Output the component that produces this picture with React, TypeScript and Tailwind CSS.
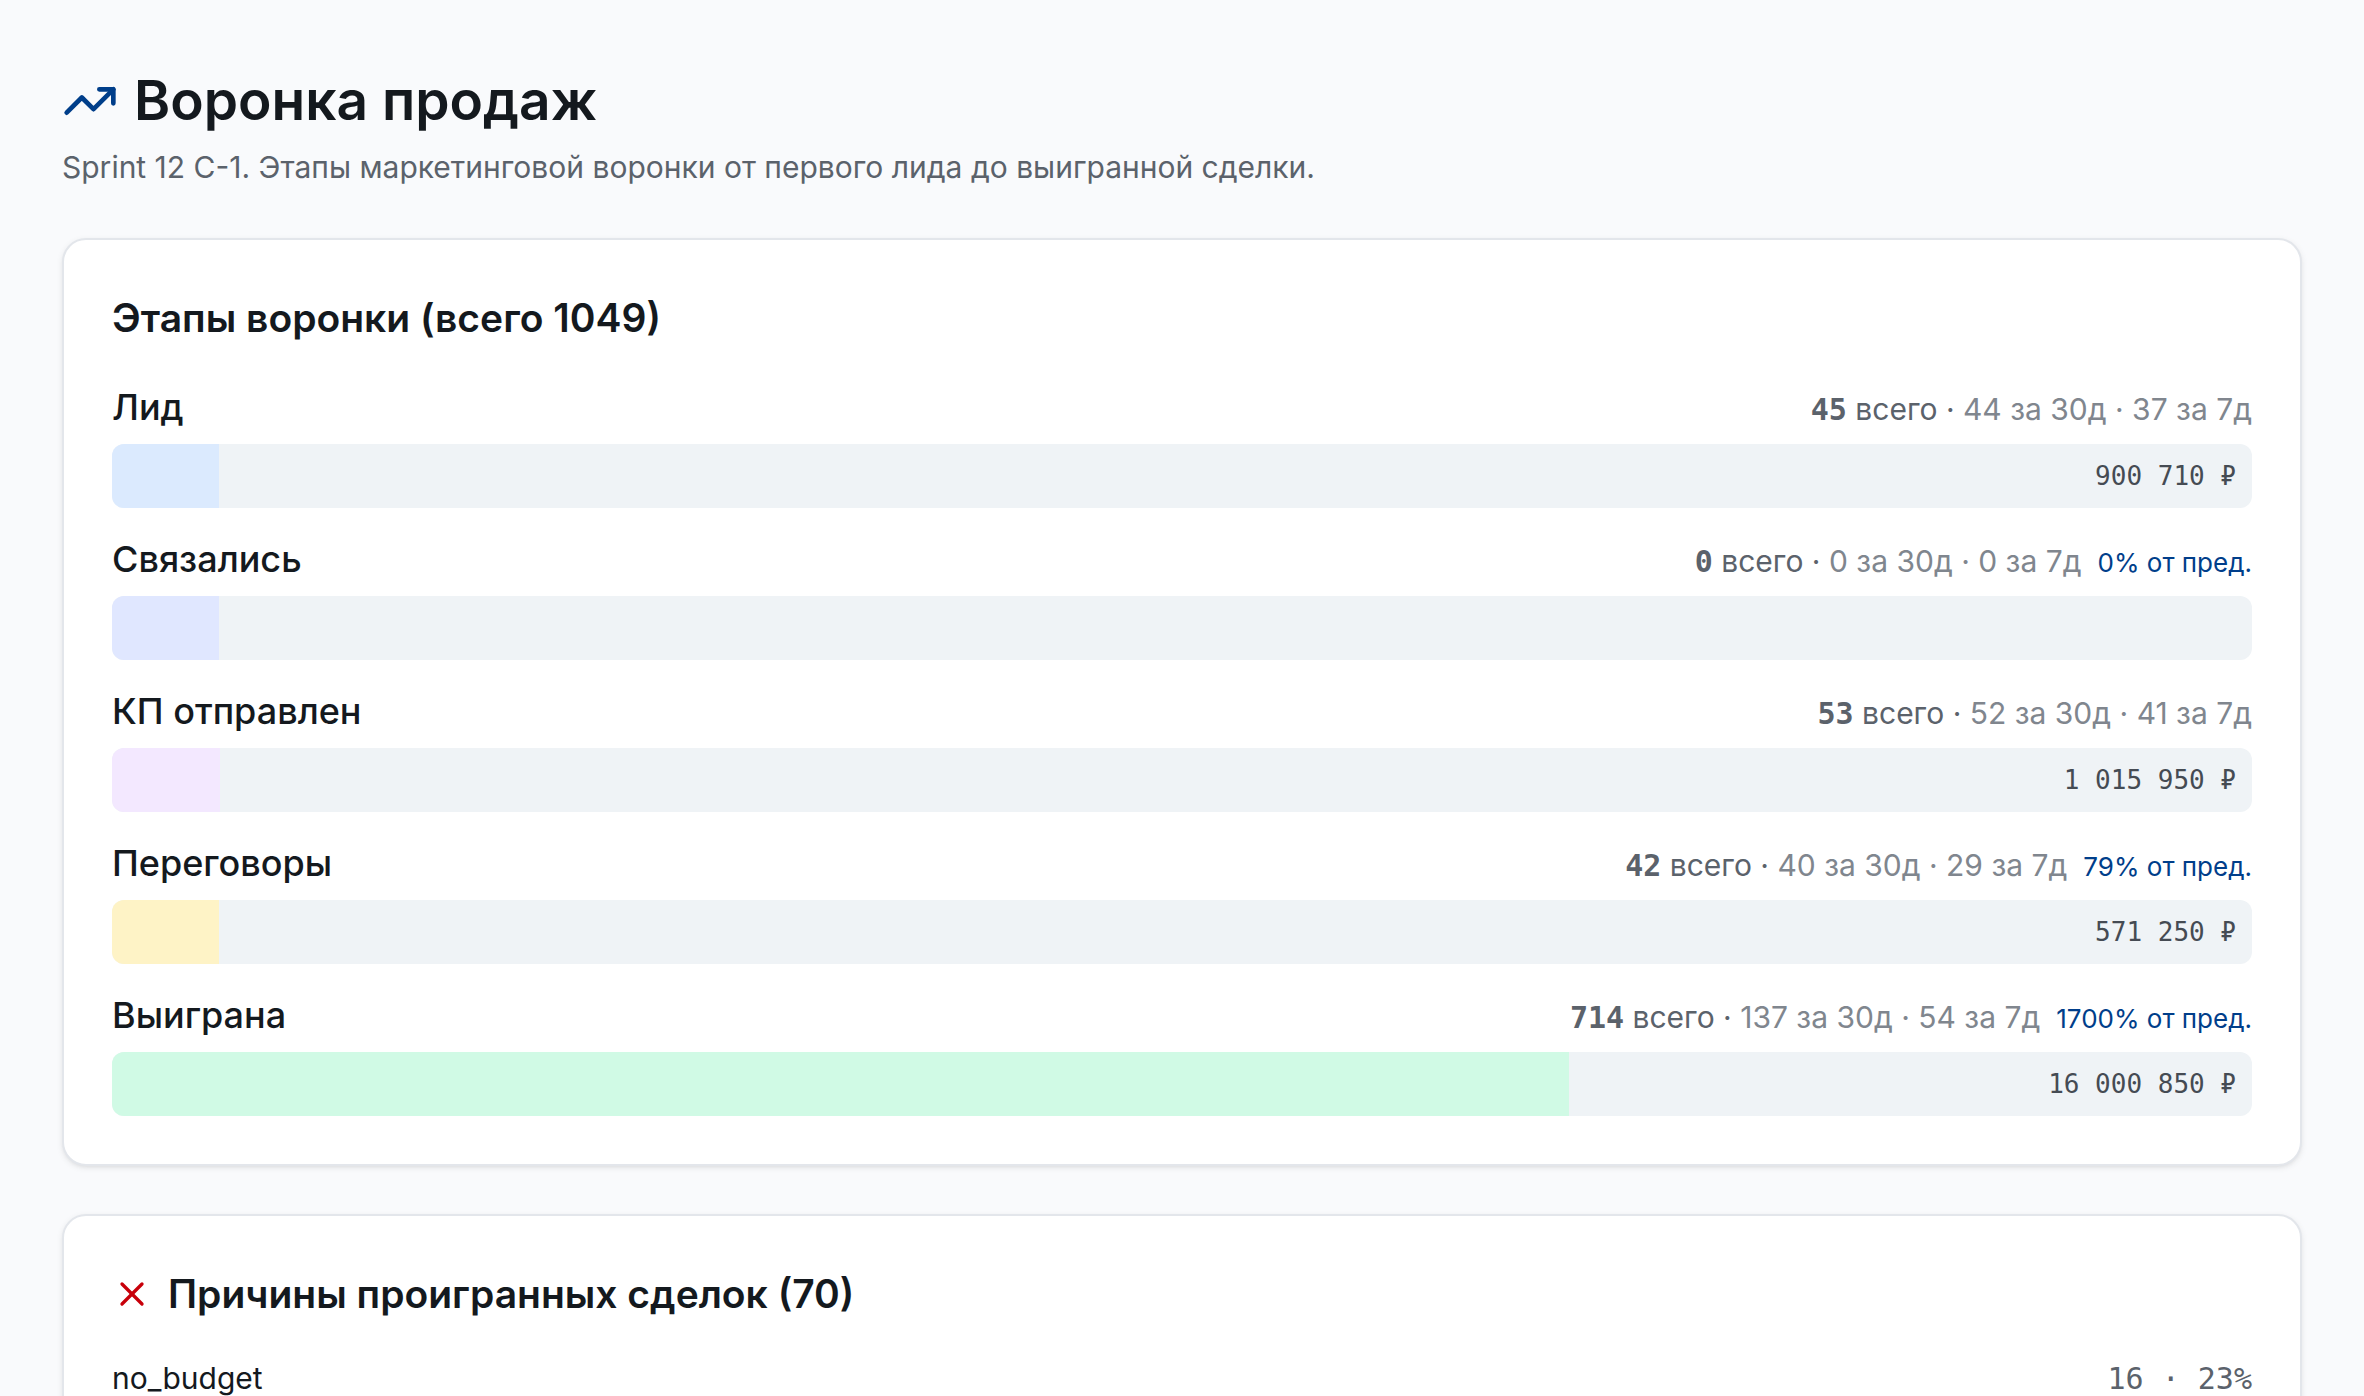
import React from "react";
import { TrendingUp, X } from "lucide-react";

interface FunnelStage {
  key: string;
  label: string;
  total: number;
  last30d: number;
  last7d: number;
  amount: number;
  conversion?: number;
  color: string;
}

interface LostReason {
  reason: string;
  count: number;
}

const TOTAL_DEALS = 1049;
const TOTAL_LOST = 70;

const stages: FunnelStage[] = [
  { key: "lead", label: "Лид", total: 45, last30d: 44, last7d: 37, amount: 900710, color: "bg-blue-100" },
  { key: "contacted", label: "Связались", total: 0, last30d: 0, last7d: 0, amount: 0, conversion: 0, color: "bg-indigo-100" },
  { key: "proposal", label: "КП отправлен", total: 53, last30d: 52, last7d: 41, amount: 1015950, color: "bg-purple-100" },
  { key: "negotiation", label: "Переговоры", total: 42, last30d: 40, last7d: 29, amount: 571250, conversion: 79, color: "bg-amber-100" },
  { key: "won", label: "Выиграна", total: 714, last30d: 137, last7d: 54, amount: 16000850, conversion: 1700, color: "bg-emerald-100" },
];

const lostReasons: LostReason[] = [{ reason: "no_budget", count: 16 }];

const formatAmount = (value: number) =>
  `${String(value).replace(/\B(?=(\d{3})+$)/g, "\u00a0")}\u00a0₽`;

function Card({ children }: { children: React.ReactNode }) {
  return (
    <section className="rounded-3xl border-2 border-[#e3e6eb] bg-white p-12 shadow-[0_2px_6px_rgba(0,0,0,0.08),0_2px_4px_-2px_rgba(0,0,0,0.08)]">
      {children}
    </section>
  );
}

function StageRow({ stage }: { stage: FunnelStage }) {
  // Small stages still get a visible sliver
  const width = Math.max(5, (stage.total / TOTAL_DEALS) * 100);

  return (
    <li>
      <div className="mb-2.5 flex items-baseline justify-between">
        <span className="text-[36px] leading-[54px] font-medium">{stage.label}</span>
        <span className="text-[30px] leading-[44px] text-[#5b626b]">
          <span className="font-['DejaVu_Sans_Mono',monospace] font-bold">{stage.total}</span> всего ·{" "}
          <span className="text-[#80868e]">
            {stage.last30d} за 30д · {stage.last7d} за 7д
          </span>
          {stage.conversion !== undefined && (
            <span className="ml-4 text-[26px] text-[#003e8a]">{stage.conversion}% от пред.</span>
          )}
        </span>
      </div>
      <div className="flex h-16 items-center overflow-hidden rounded-xl bg-[#eff3f6]">
        <div className={`h-full shrink-0 ${stage.color}`} style={{ width: `${width}%` }} />
        {stage.amount > 0 && (
          <span className="ml-auto pr-4 font-['DejaVu_Sans_Mono',monospace] text-[26px] leading-[40px] text-[#454b53]">
            {formatAmount(stage.amount)}
          </span>
        )}
      </div>
    </li>
  );
}

export default function App() {
  return (
    <main className="min-h-screen space-y-12 bg-[#f9fafc] px-[62px] py-16 font-['Inter',sans-serif] text-[#14191e]">
      <header>
        <h1 className="flex items-center gap-4 text-[55px] leading-[73px] font-semibold">
          <TrendingUp className="size-14 text-[#003e8a]" />
          Воронка продаж
        </h1>
        <p className="mt-2 text-[30px] leading-[45px] text-[#5b626b]">
          Sprint 12 C-1. Этапы маркетинговой воронки от первого лида до выигранной сделки.
        </p>
      </header>

      {/* Funnel stages */}
      <Card>
        <h2 className="mb-8 text-[39px] leading-[60px] font-semibold">Этапы воронки (всего {TOTAL_DEALS})</h2>
        <ul className="space-y-6">
          {stages.map((stage) => (
            <StageRow key={stage.key} stage={stage} />
          ))}
        </ul>
      </Card>

      {/* Lost deals */}
      <Card>
        <h2 className="mb-8 flex items-center gap-4 text-[39px] leading-[60px] font-semibold">
          <X className="size-10 text-[#c8000a]" />
          Причины проигранных сделок ({TOTAL_LOST})
        </h2>
        <ul className="space-y-4">
          {lostReasons.map(({ reason, count }) => (
            <li key={reason} className="flex items-baseline justify-between text-[30px] leading-[44px]">
              <span>{reason}</span>
              <span className="font-['DejaVu_Sans_Mono',monospace] text-[#5b626b]">
                {count} · {Math.round((count / TOTAL_LOST) * 100)}%
              </span>
            </li>
          ))}
        </ul>
      </Card>
    </main>
  );
}
